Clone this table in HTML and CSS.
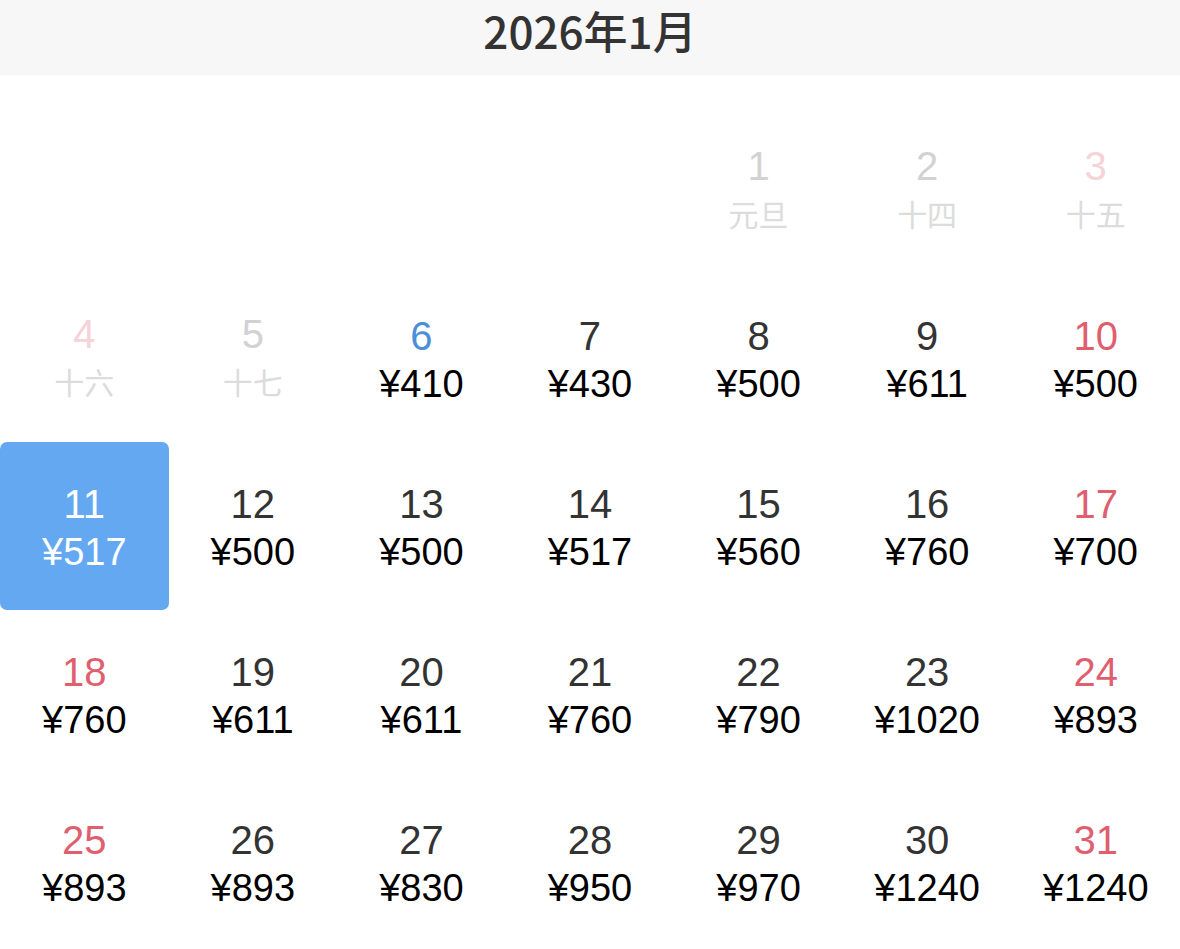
FILE: index.html
```html
<!DOCTYPE html>
<html lang="zh-CN">
<head>
<meta charset="utf-8">
<title>2026年1月</title>
<link rel="stylesheet" href="styles.css">
</head>
<body>
<div class="page">
  <header class="month-head"><span class="month-title">2026年1月</span></header>
  <div class="grid">
    <div class="cell"></div>
    <div class="cell"></div>
    <div class="cell"></div>
    <div class="cell"></div>
    <div class="cell past"><span class="day">1</span><span class="sub">元旦</span></div>
    <div class="cell past"><span class="day">2</span><span class="sub">十四</span></div>
    <div class="cell past weekend"><span class="day">3</span><span class="sub">十五</span></div>

    <div class="cell past weekend"><span class="day">4</span><span class="sub">十六</span></div>
    <div class="cell past"><span class="day">5</span><span class="sub">十七</span></div>
    <div class="cell today"><span class="day">6</span><span class="price">¥410</span></div>
    <div class="cell"><span class="day">7</span><span class="price">¥430</span></div>
    <div class="cell"><span class="day">8</span><span class="price">¥500</span></div>
    <div class="cell"><span class="day">9</span><span class="price">¥611</span></div>
    <div class="cell weekend"><span class="day">10</span><span class="price">¥500</span></div>

    <div class="cell selected"><span class="day">11</span><span class="price">¥517</span></div>
    <div class="cell"><span class="day">12</span><span class="price">¥500</span></div>
    <div class="cell"><span class="day">13</span><span class="price">¥500</span></div>
    <div class="cell"><span class="day">14</span><span class="price">¥517</span></div>
    <div class="cell"><span class="day">15</span><span class="price">¥560</span></div>
    <div class="cell"><span class="day">16</span><span class="price">¥760</span></div>
    <div class="cell weekend"><span class="day">17</span><span class="price">¥700</span></div>

    <div class="cell weekend"><span class="day">18</span><span class="price">¥760</span></div>
    <div class="cell"><span class="day">19</span><span class="price">¥611</span></div>
    <div class="cell"><span class="day">20</span><span class="price">¥611</span></div>
    <div class="cell"><span class="day">21</span><span class="price">¥760</span></div>
    <div class="cell"><span class="day">22</span><span class="price">¥790</span></div>
    <div class="cell"><span class="day">23</span><span class="price">¥1020</span></div>
    <div class="cell weekend"><span class="day">24</span><span class="price">¥893</span></div>

    <div class="cell weekend"><span class="day">25</span><span class="price">¥893</span></div>
    <div class="cell"><span class="day">26</span><span class="price">¥893</span></div>
    <div class="cell"><span class="day">27</span><span class="price">¥830</span></div>
    <div class="cell"><span class="day">28</span><span class="price">¥950</span></div>
    <div class="cell"><span class="day">29</span><span class="price">¥970</span></div>
    <div class="cell"><span class="day">30</span><span class="price">¥1240</span></div>
    <div class="cell weekend"><span class="day">31</span><span class="price">¥1240</span></div>
  </div>
</div>
</body>
</html>
```

FILE: styles.css
```css
html, body {
  margin: 0;
  padding: 0;
  background: #ffffff;
}

body {
  font-family: "Liberation Sans", "Noto Sans CJK SC", sans-serif;
  color: #333333;
  overflow: hidden;
}

.page {
  width: 1180px;
  height: 949px;
  display: flex;
  flex-direction: column;
}

.month-head {
  height: 75px;
  flex: none;
  background: #f7f7f7;
  display: flex;
  align-items: flex-start;
  justify-content: center;
  padding-top: 4px;
  box-sizing: border-box;
}

.month-title {
  font-family: "Noto Sans CJK SC", sans-serif;
  font-weight: 500;
  font-size: 44px;
  line-height: 52px;
  color: #333333;
}

.grid {
  margin-top: 31px;
  display: grid;
  grid-template-columns: repeat(7, 1fr);
  grid-auto-rows: 168px;
}

.cell {
  display: flex;
  flex-direction: column;
  align-items: center;
  justify-content: center;
  border-radius: 7px;
  padding-top: 4px;
}

.day {
  font-size: 40px;
  line-height: 48px;
  color: #333333;
}

.price {
  font-size: 38px;
  line-height: 48px;
  color: #000000;
}

.sub {
  font-size: 30px;
  line-height: 52px;
  color: #dcdcdc;
}

.weekend .day {
  color: #df5f6e;
}

.today .day {
  color: #4a90d9;
}

.past .day {
  color: #d2d2d2;
}

.past.weekend .day {
  color: #f5d3d8;
}

.selected {
  background: #64a8f2;
}

.selected .day,
.selected .price {
  color: #ffffff;
}
```
